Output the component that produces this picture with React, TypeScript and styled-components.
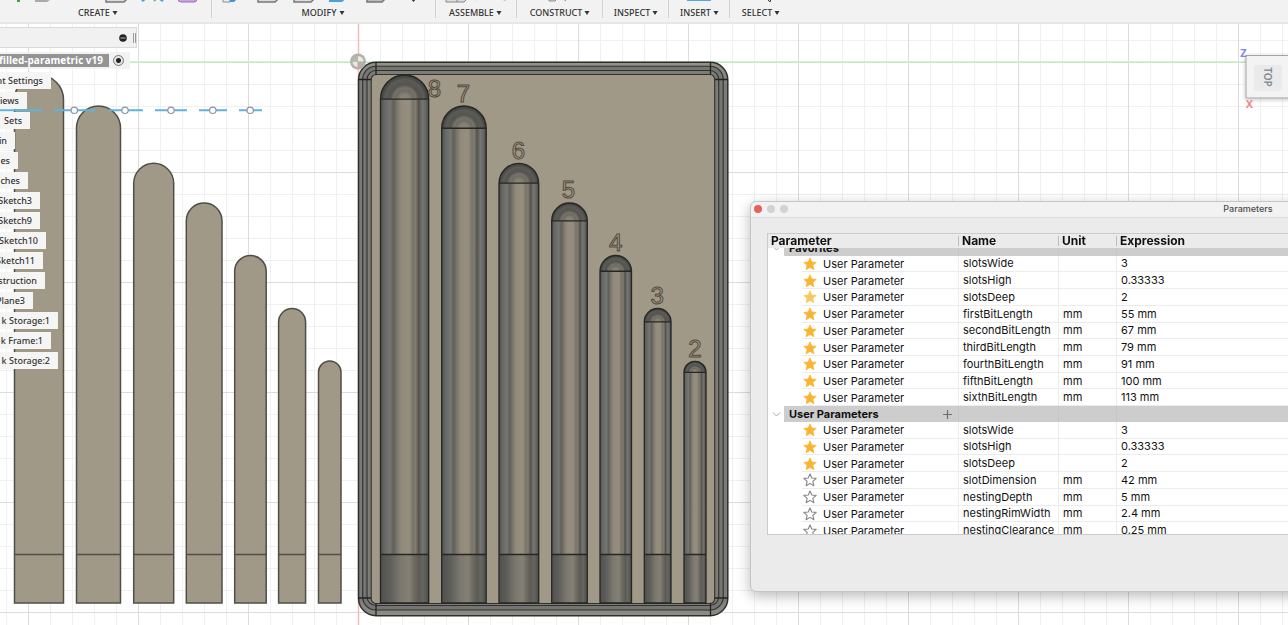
import React, { useLayoutEffect, useRef } from 'react';
import styled, { createGlobalStyle } from 'styled-components';

const GlobalStyle = createGlobalStyle`
  *, *::before, *::after { box-sizing: border-box; }
  html, body, #root { height: 100%; }
  body { margin: 0; overflow: hidden; background: #fff; }
  button { border: 0; padding: 0; margin: 0; background: none; font: inherit; color: inherit; }
  ul { list-style: none; margin: 0; padding: 0; }
`;

const Shell = styled.div`
  display: flex;
  flex-direction: column;
  height: 100%;
`;

/* ---------- toolbar ---------- */

const Toolbar = styled.header`
  display: flex;
  flex: none;
  height: 24px;
  background: #f2f2f2;
  border-bottom: 2px solid #e6e6e6;
  overflow: hidden;
`;

const ToolGroup = styled.div<{ $w: number }>`
  display: flex;
  flex-direction: column;
  flex: none;
  width: ${(p) => p.$w}px;
  position: relative;
  &:not(:last-child)::after {
    content: '';
    position: absolute;
    right: 0;
    top: 0;
    width: 1px;
    height: 18px;
    background: #d2d2d2;
  }
`;

const ToolIcons = styled.svg`
  display: block;
  width: 100%;
  height: 6px;
`;

const ToolLabel = styled.button<{ $shift?: number }>`
  display: flex;
  align-items: center;
  justify-content: center;
  gap: 2px;
  height: 14px;
  padding-right: ${(p) => p.$shift ?? 0}px;
  font: 500 9px/14px 'Noto Sans', sans-serif;
  color: #333;
`;

const Caret = () => (
  <svg width="6" height="6" viewBox="0 0 6 6" aria-hidden="true">
    <path d="M0.5 1H5.5L3 5Z" fill="#333" />
  </svg>
);

const Box = ({ x, w, fill = '#dcdcdc' }: { x: number; w: number; fill?: string }) => (
  <path d={`M${x} -4V2H${x + w - 5}L${x + w} -3`} fill={fill} stroke="#777" strokeWidth="1.500" />
);

const groups: { name: string; w: number; shift?: number; art: React.ReactNode }[] = [
  {
    name: 'CREATE',
    w: 212,
    shift: 16,
    art: (
      <>
        <rect x="17" y="-2" width="3" height="4" fill="#3aa63f" />
        <path d="M35 -3V2H47L53 -2Z" fill="#aaa" />
        <Box x={106} w={23} />
        <path d="M142 1L146 -2M159 -2L163 1" stroke="#4a9fd0" strokeWidth="2.5" />
        <path d="M154 1L157 -2" stroke="#66bb77" strokeWidth="2" />
        <rect x="178" y="-8" width="19" height="10" rx="3" fill="#c8a4e6" stroke="#9a6cc4" />
      </>
    ),
  },
  {
    name: 'MODIFY',
    w: 224,
    shift: 2,
    art: (
      <>
        <path d="M11 -2V2H18V-2" fill="#eee" stroke="#888" />
        <path d="M18 -2V2H22L26 -2Z" fill="#3f93d8" />
        <Box x={46} w={22} />
        <Box x={82} w={22} />
        <path d="M117 -2V2H130L135 -2Z" fill="#4a9fe0" />
        <Box x={155} w={20} fill="#bbb" />
        <path d="M199 -1H204L201.500 2Z" fill="#333" />
      </>
    ),
  },
  {
    name: 'ASSEMBLE',
    w: 81,
    shift: 2,
    art: (
      <>
        <path d="M10 -3V2H28L32 -2M21 -3V2" fill="#ddd" stroke="#888" />
        <path d="M37 -1L40 0M66 -1L70 1" stroke="#bbb" />
      </>
    ),
  },
  {
    name: 'CONSTRUCT',
    w: 86,
    art: <path d="M32 -3V1H38L41 -2M45 -2L49 1" fill="#ddd" stroke="#888" />,
  },
  { name: 'INSPECT', w: 66, art: null },
  { name: 'INSERT', w: 61, art: <rect x="18" y="-4" width="24" height="5" fill="#58a6da" /> },
  { name: 'SELECT', w: 62, art: <path d="M37 -1L40 2L41 -1" stroke="#333" fill="none" /> },
];

/* ---------- viewport ---------- */

const Viewport = styled.main`
  position: relative;
  flex: 1;
  min-height: 0;
  overflow: hidden;
  background: #fff;
`;

const Scene = styled.svg`
  position: absolute;
  inset: 0;
  width: 100%;
  height: 100%;
`;

const FLOOR = 603;
const flatSlots = [
  { l: 14.5, r: 63.5, top: 75 },
  { l: 76.5, r: 120.5, top: 106 },
  { l: 133.7, r: 173.7, top: 163.3 },
  { l: 186.3, r: 222, top: 203 },
  { l: 234.7, r: 266.2, top: 255.5 },
  { l: 278.6, r: 305.6, top: 308.5 },
  { l: 318.5, r: 341, top: 361 },
];
const cutSlots = [
  { l: 380.5, r: 428.7, top: 75, n: '8', nx: 434.5, ny: 97 },
  { l: 441.7, r: 486.2, top: 106, n: '7', nx: 463.5, ny: 102 },
  { l: 499, r: 538.7, top: 163.3, n: '6', nx: 518.5, ny: 159 },
  { l: 551.7, r: 587.3, top: 203, n: '5', nx: 568.5, ny: 198 },
  { l: 600, r: 631.5, top: 255.5, n: '4', nx: 615.8, ny: 251 },
  { l: 644.3, r: 671, top: 308.5, n: '3', nx: 657.2, ny: 304 },
  { l: 684, r: 706, top: 361.3, n: '2', nx: 695, ny: 357 },
];

const slotPath = (l: number, r: number, top: number) => {
  const rad = (r - l) / 2;
  return `M${l} ${FLOOR}V${top + rad}A${rad} ${rad} 0 0 1 ${r} ${top + rad}V${FLOOR}Z`;
};

const Model = () => (
  <Scene aria-label="Model view">
    <defs>
      <pattern id="minor" width="22" height="22" patternUnits="userSpaceOnUse" x="6" y="-6">
        <path d="M0.500 0V22M0 0.500H22" stroke="#f0f0f0" />
      </pattern>
      <pattern id="major" width="110" height="110" patternUnits="userSpaceOnUse" x="28" y="-72">
        <path d="M0.500 0V110M0 0.500H110" stroke="#dcdcdc" />
      </pattern>
      <linearGradient id="groove">
        <stop offset="0" stopColor="#4e504d" />
        <stop offset="0.08" stopColor="#646764" />
        <stop offset="0.2" stopColor="#757772" />
        <stop offset="0.27" stopColor="#605f58" />
        <stop offset="0.36" stopColor="#7f7b71" />
        <stop offset="0.44" stopColor="#938c7d" />
        <stop offset="0.6" stopColor="#958e7e" />
        <stop offset="0.68" stopColor="#777369" />
        <stop offset="0.73" stopColor="#837d71" />
        <stop offset="0.79" stopColor="#55524c" />
        <stop offset="0.87" stopColor="#747673" />
        <stop offset="0.94" stopColor="#646664" />
        <stop offset="1" stopColor="#494945" />
      </linearGradient>
      <linearGradient id="foot">
        <stop offset="0" stopColor="#50514e" />
        <stop offset="0.2" stopColor="#5e5e5a" />
        <stop offset="0.42" stopColor="#7b786f" />
        <stop offset="0.6" stopColor="#858075" />
        <stop offset="0.68" stopColor="#716e65" />
        <stop offset="0.8" stopColor="#5c5a54" />
        <stop offset="0.88" stopColor="#666663" />
        <stop offset="1" stopColor="#4c4c49" />
      </linearGradient>
      <radialGradient id="dome" cx="0.5" cy="1" r="1" gradientTransform="translate(0.5 0) scale(0.5 1) translate(-0.5 0)">
        <stop offset="0" stopColor="#8f8878" />
        <stop offset="0.2" stopColor="#857f71" />
        <stop offset="0.36" stopColor="#6e6b63" />
        <stop offset="0.46" stopColor="#75736b" />
        <stop offset="0.6" stopColor="#55534d" />
        <stop offset="0.8" stopColor="#5b5b57" />
        <stop offset="1" stopColor="#3c3c38" />
      </radialGradient>
      <linearGradient id="rim" x1="0" y1="0" x2="0" y2="1">
        <stop offset="0" stopColor="#949386" />
        <stop offset="0.04" stopColor="#7b7c78" />
        <stop offset="0.97" stopColor="#7b7c78" />
        <stop offset="1" stopColor="#908e82" />
      </linearGradient>
    </defs>
    <rect width="100%" height="100%" fill="url(#minor)" />
    <rect width="100%" height="100%" fill="url(#major)" />
    <g transform="translate(0 -24)">
      <path d="M0 62H4000" stroke="#c2efbf" strokeWidth="1.500" />
      <path d="M358.500 24V4000" stroke="#f6bcbc" strokeWidth="1.500" />

      {flatSlots.map((s) => (
        <g key={s.l} stroke="#4f4f48" strokeWidth="1.500">
          <path d={slotPath(s.l, s.r, s.top)} fill="#a09988" />
          <path d={`M${s.l} 554.500H${s.r}`} />
        </g>
      ))}

      <g stroke="#5fb4dc" strokeWidth="2">
        <path d="M0 110.300H42M54 110.300H95M109 110.300H143M155 110.300H187M199 110.300H227M239 110.300H262" />
      </g>
      <g fill="#fff" stroke="#8d93a0" strokeWidth="1.200">
        {[74.3, 125, 171, 212.8, 250.2].map((x) => (
          <circle key={x} cx={x} cy="110.300" r="3.200" />
        ))}
      </g>

      <rect x="358.500" y="62.300" width="369.300" height="553.400" rx="17.500" fill="url(#rim)" stroke="#2f302d" strokeWidth="1.500" />
      <rect x="362.700" y="66.300" width="360.500" height="543.700" rx="13" fill="#757673" stroke="#30312f" strokeWidth="1.100" />
      <rect x="367" y="70.500" width="351.700" height="535" rx="9" fill="#7d7d76" stroke="#30312f" strokeWidth="1.100" />
      <rect x="371.200" y="74.500" width="343.500" height="529" rx="5" fill="#a09988" stroke="#30312f" strokeWidth="1.100" />
      <path
        d="M376 62V75M710.500 62V75M376 603V616M710.500 603V616M358 79.500H371M715 79.500H728M358 598H371M715 598H728"
        stroke="#222"
        strokeWidth="1.300"
      />

      {cutSlots.map((s) => {
        const rad = (s.r - s.l) / 2;
        const y = s.top + rad;
        return (
          <g key={s.n}>
            <rect x={s.l} y={y} width={rad * 2} height={554.5 - y} fill="url(#groove)" />
            <rect x={s.l} y="554.500" width={rad * 2} height={FLOOR - 554.5} fill="url(#foot)" />
            <path d={`M${s.l} ${y}A${rad} ${rad} 0 0 1 ${s.r} ${y}Z`} fill="url(#dome)" />
            <path
              d={`${slotPath(s.l, s.r, s.top)}M${s.l} ${y}H${s.r}M${s.l} 554.500H${s.r}`}
              fill="none"
              stroke="#262623"
              strokeWidth="1.300"
            />
            <text
              x={s.nx}
              y={s.ny}
              textAnchor="middle"
              fontFamily="'Liberation Sans', Arial, sans-serif"
              fontSize="24"
              fill="#a89f89"
              stroke="#51493c"
              strokeWidth="1"
            >
              {s.n}
            </text>
          </g>
        );
      })}

      <g>
        <circle cx="358" cy="61.500" r="8" fill="#aaa9a4" fillOpacity="0.900" />
        <path d="M358 61.500V56A5.500 5.500 0 0 0 352.500 61.500Z" fill="#bdb5b3" />
        <path d="M358 61.500V56A5.500 5.500 0 0 1 363.500 61.500Z" fill="#e3efe0" />
        <path d="M358 61.500V67A5.500 5.500 0 0 1 352.500 61.500Z" fill="#f0e3e3" />
        <path d="M350 61.500H358" stroke="#9bd39a" />
        <path d="M358 61.500V69.500" stroke="#e89a9a" />
      </g>
    </g>
  </Scene>
);

const CubeArt = styled.svg`
  position: absolute;
  top: 20px;
  right: 0;
  width: 52px;
  height: 68px;
`;

const ViewCube = () => (
  <CubeArt viewBox="0 0 52 68" fontFamily="'Noto Sans', sans-serif">
    <defs>
      <filter id="cubeShadow" x="-0.200" y="-0.200" width="1.400" height="1.500">
        <feDropShadow dx="0" dy="1" stdDeviation="2" floodOpacity="0.250" />
      </filter>
    </defs>
    <rect x="10" y="11.500" width="60" height="42.500" fill="#f3f3f3" stroke="#a5a5a5" filter="url(#cubeShadow)" />
    <rect x="18" y="21" width="28" height="26" rx="2" fill="#e9eaec" />
    <text transform="translate(28 33) rotate(90)" textAnchor="middle" fontSize="10" fontWeight="600" fill="#85898d">
      TOP
    </text>
    <text x="7.500" y="13" textAnchor="middle" fontSize="11" fontWeight="700" fill="#8383ee">
      Z
    </text>
    <text x="13.500" y="64" textAnchor="middle" fontSize="11" fontWeight="700" fill="#f28b8b">
      X
    </text>
  </CubeArt>
);

/* ---------- browser tree ---------- */

const Browser = styled.nav`
  position: relative;
  width: 137px;
  padding-top: 3px;
  font: 500 9px/17px 'Noto Sans', sans-serif;
  color: #333;
`;

const BrowserHead = styled.div`
  display: flex;
  align-items: center;
  justify-content: flex-end;
  gap: 6px;
  height: 21px;
  margin-bottom: 4px;
  background: #f1f1f1;
  border: 1px solid #dadada;
  border-left: 0;
`;

const HeadButton = styled.button`
  display: flex;
`;

const Grip = styled.span`
  width: 3px;
  height: 10px;
  border: 1px solid #999;
  border-width: 0 1px;
`;

const Tree = styled.ul`
  display: flex;
  flex-direction: column;
  align-items: flex-start;
  gap: 3px;
`;

const Node = styled.li<{ $w: number }>`
  display: flex;
  justify-content: flex-end;
  width: ${(p) => p.$w}px;
  height: 17px;
  padding-right: 8px;
  overflow: hidden;
  white-space: nowrap;
  background: #f5f5f4;
`;

const RootNode = styled.li`
  display: flex;
  align-items: center;
  width: 130px;
  height: 17px;
  background: #f2f2f2;
`;

const RootName = styled.span`
  display: flex;
  align-items: center;
  justify-content: flex-end;
  width: 109px;
  height: 13px;
  padding-right: 6px;
  overflow: hidden;
  white-space: nowrap;
  background: #949494;
  color: #fff;
  font: 700 10px/13px 'Open Sans', sans-serif;
`;

const Activate = styled.input`
  appearance: none;
  width: 11px;
  height: 11px;
  margin: 0 0 0 4px;
  border: 1px solid #777;
  border-radius: 50%;
  background: radial-gradient(circle, #222 0 2px, #e2e4e8 3px);
`;

const nodes: [string, number][] = [
  ['nt Settings', 51],
  ['Views', 27],
  ['Sets', 30],
  ['in', 15],
  ['es', 18],
  ['ches', 28],
  ['Sketch3', 40],
  ['Sketch9', 40],
  ['Sketch10', 46],
  ['Sketch11', 43],
  ['struction', 45],
  ['Plane3', 33],
  ['k Storage:1', 58],
  ['k Frame:1', 51],
  ['k Storage:2', 58],
];

/* ---------- parameters window ---------- */

const Dialog = styled.section`
  position: absolute;
  left: 750px;
  top: 177px;
  width: 996px;
  display: flex;
  flex-direction: column;
  background: #ebebeb;
  border: 1px solid #c6c6c6;
  border-radius: 6px;
  box-shadow: 0 4px 14px rgba(0, 0, 0, 0.28);
  font-family: Inter, sans-serif;
  color: #111;
`;

const TitleBar = styled.div`
  display: grid;
  grid-template-columns: 1fr auto 1fr;
  align-items: center;
  height: 16px;
  padding: 0 3px 2px;
  border-bottom: 1px solid #dedede;
  border-radius: 6px 6px 0 0;
  background: #f3f2f2;
`;

const Lights = styled.div`
  display: flex;
  gap: 5px;
`;

const Light = styled.button<{ $on?: boolean }>`
  width: 8px;
  height: 8px;
  border-radius: 50%;
  background: ${(p) => (p.$on ? '#e8605a' : '#d3d2d2')};
`;

const Title = styled.h2`
  margin: 0;
  font-size: 9px;
  line-height: 13px;
  font-weight: 500;
  color: #4c4c4c;
`;

const Scroller = styled.div`
  height: 302px;
  margin: 15px 16px 56px;
  overflow: hidden;
  background: #fff;
  border: 1px solid #cbcbcb;
`;

const Table = styled.table`
  width: 100%;
  height: 313px;
  table-layout: fixed;
  border-collapse: separate;
  border-spacing: 0;
  font-size: 11px;
  line-height: 14px;
`;

const Head = styled.th`
  position: sticky;
  top: 0;
  z-index: 1;
  height: 14px;
  padding: 0 3px;
  text-align: left;
  font-size: 12px;
  font-weight: 700;
  background: #ebebeb;
  & + &::before {
    content: '';
    position: absolute;
    left: -1px;
    top: 2px;
    width: 1px;
    height: 10px;
    background: #bdbdbd;
  }
`;

const Cell = styled.td`
  padding: 0 4px;
  white-space: nowrap;
  overflow: hidden;
  border-bottom: 1px solid #ececec;
  &:not(:last-child) {
    border-right: 1px solid #ececec;
  }
`;

const NameCell = styled(Cell)`
  padding-left: 35px;
  border-bottom: 0;
  background: linear-gradient(#ececec, #ececec) 34px 100% / 100% 1px no-repeat;
`;

const KindLine = styled.div`
  display: flex;
  align-items: center;
  gap: 6px;
  height: 14px;
`;

const GroupCell = styled.td`
  padding: 0;
  background: #cdcdcd;
  &:not(:last-child) {
    border-right: 1px solid #c6c6c6;
  }
`;

const GroupNameCell = styled(GroupCell)`
  background: linear-gradient(#cdcdcd, #cdcdcd) 16px 0 / 100% 100% no-repeat;
`;

const GroupLine = styled.div`
  display: flex;
  align-items: center;
  height: 14px;
  padding: 0 6px 0 4px;
  font-weight: 700;
  color: #111;
`;

const GroupName = styled.span`
  flex: 1;
  padding-left: 8px;
`;

const IconButton = styled.button`
  display: flex;
  flex: none;
`;

const Star = ({ on, soft }: { on: boolean; soft?: boolean }) => (
  <IconButton aria-label={on ? 'Remove from favorites' : 'Add to favorites'}>
    <svg width="14" height="14" viewBox="0 0 14 14">
      <path
        d="M7 0.900L8.750 5L13.200 5.400L9.850 8.350L10.850 12.700L7 10.400L3.150 12.700L4.150 8.350L0.800 5.400L5.250 5Z"
        fill={on ? (soft ? '#f9c95f' : '#f9b532') : '#fff'}
        stroke={on ? (soft ? '#f9c95f' : '#f9b532') : '#858585'}
        strokeWidth={on ? 0.8 : 1.1}
        strokeLinejoin="round"
      />
    </svg>
  </IconButton>
);

type Param = { name: string; unit: string; value: string; fav: boolean; soft?: boolean };
const p = (name: string, unit: string, value: string, fav = true, soft = false): Param => ({ name, unit, value, fav, soft });

const sections: { title: string; addable: boolean; rows: Param[] }[] = [
  {
    title: 'Favorites',
    addable: false,
    rows: [
      p('slotsWide', '', '3'),
      p('slotsHigh', '', '0.33333'),
      p('slotsDeep', '', '2', true, true),
      p('firstBitLength', 'mm', '55 mm'),
      p('secondBitLength', 'mm', '67 mm'),
      p('thirdBitLength', 'mm', '79 mm'),
      p('fourthBitLength', 'mm', '91 mm'),
      p('fifthBitLength', 'mm', '100 mm'),
      p('sixthBitLength', 'mm', '113 mm'),
    ],
  },
  {
    title: 'User Parameters',
    addable: true,
    rows: [
      p('slotsWide', '', '3'),
      p('slotsHigh', '', '0.33333'),
      p('slotsDeep', '', '2'),
      p('slotDimension', 'mm', '42 mm', false),
      p('nestingDepth', 'mm', '5 mm', false),
      p('nestingRimWidth', 'mm', '2.4 mm', false),
      p('nestingClearance', 'mm', '0.25 mm', false),
    ],
  },
];

const Parameters = () => {
  const scroller = useRef<HTMLDivElement>(null);
  useLayoutEffect(() => {
    if (scroller.current) scroller.current.scrollTop = 8;
  }, []);

  return (
    <Dialog role="dialog" aria-label="Parameters">
      <TitleBar>
        <Lights>
          <Light $on aria-label="Close" />
          <Light aria-label="Minimize" />
          <Light aria-label="Zoom" />
        </Lights>
        <Title>Parameters</Title>
      </TitleBar>
      <Scroller ref={scroller}>
        <Table>
          <colgroup>
            <col style={{ width: 191 }} />
            <col style={{ width: 100 }} />
            <col style={{ width: 58 }} />
            <col />
          </colgroup>
          <thead>
            <tr>
              <Head>Parameter</Head>
              <Head>Name</Head>
              <Head>Unit</Head>
              <Head>Expression</Head>
            </tr>
          </thead>
          <tbody>
            {sections.map((s) => (
              <React.Fragment key={s.title}>
                <tr>
                  <GroupNameCell>
                    <GroupLine>
                      <IconButton aria-label={`Collapse ${s.title}`}>
                        <svg width="9" height="8" viewBox="0 0 9 8">
                          <path d="M1 2.500L4.500 6L8 2.500" fill="none" stroke="#aaa" />
                        </svg>
                      </IconButton>
                      <GroupName>{s.title}</GroupName>
                      {s.addable && (
                        <IconButton aria-label="Add parameter">
                          <svg width="9" height="9" viewBox="0 0 9 9">
                            <path d="M4.500 0V9M0 4.500H9" stroke="#6f6f6f" strokeWidth="1.200" />
                          </svg>
                        </IconButton>
                      )}
                    </GroupLine>
                  </GroupNameCell>
                  <GroupCell />
                  <GroupCell />
                  <GroupCell />
                </tr>
                {s.rows.map((r) => (
                  <tr key={r.name}>
                    <NameCell>
                      <KindLine>
                        <Star on={r.fav} soft={r.soft} />
                        User Parameter
                      </KindLine>
                    </NameCell>
                    <Cell>{r.name}</Cell>
                    <Cell>{r.unit}</Cell>
                    <Cell>{r.value}</Cell>
                  </tr>
                ))}
              </React.Fragment>
            ))}
          </tbody>
        </Table>
      </Scroller>
    </Dialog>
  );
};

export default function App() {
  return (
    <Shell>
      <GlobalStyle />
      <Toolbar>
        {groups.map((g) => (
          <ToolGroup key={g.name} $w={g.w}>
            <ToolIcons aria-hidden="true">{g.art}</ToolIcons>
            <ToolLabel $shift={g.shift}>
              {g.name}
              <Caret />
            </ToolLabel>
          </ToolGroup>
        ))}
      </Toolbar>
      <Viewport>
        <Model />
        <Browser aria-label="Browser">
          <BrowserHead>
            <HeadButton aria-label="Collapse browser">
              <svg width="8" height="8" viewBox="0 0 8 8">
                <circle cx="4" cy="4" r="3.800" fill="#222" />
                <path d="M1.500 4H6.500" stroke="#bbb" />
              </svg>
            </HeadButton>
            <Grip />
          </BrowserHead>
          <Tree>
            <RootNode>
              <RootName>filled-parametric v19</RootName>
              <Activate type="radio" name="active" defaultChecked aria-label="Activate component" />
            </RootNode>
            {nodes.map(([name, w]) => (
              <Node key={name} $w={w}>
                {name}
              </Node>
            ))}
          </Tree>
        </Browser>
        <ViewCube />
        <Parameters />
      </Viewport>
    </Shell>
  );
}
